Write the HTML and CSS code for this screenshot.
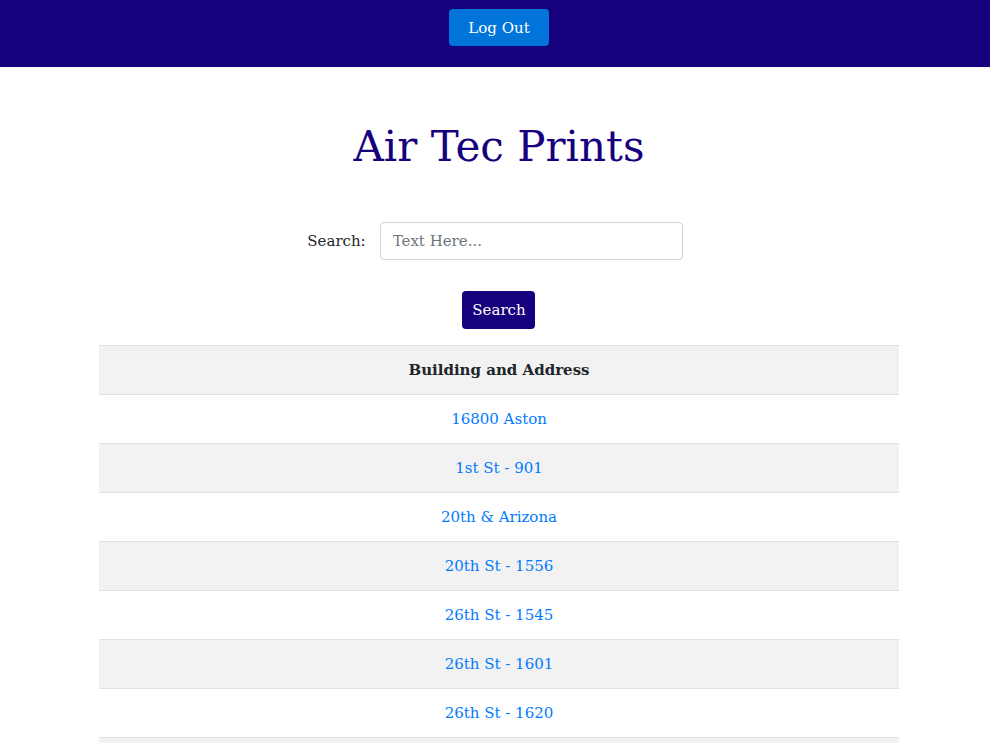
FILE: index.html
```html
<!DOCTYPE html>
<html lang="en">
<head>
<meta charset="utf-8">
<title>Air Tec Prints</title>
<link rel="stylesheet" href="styles.css">
</head>
<body>
<header class="topbar">
  <button class="btn btn-logout" type="button">Log Out</button>
</header>
<main class="content">
  <h1 class="title">Air Tec Prints</h1>
  <form class="search-form">
    <div class="search-row">
      <label class="search-label" for="q">Search:</label>
      <input class="search-input" id="q" type="text" placeholder="Text Here...">
    </div>
    <button class="btn btn-search" type="button">Search</button>
  </form>
  <table class="buildings">
    <thead>
      <tr><th>Building and Address</th></tr>
    </thead>
    <tbody>
      <tr><td><a href="#">16800 Aston</a></td></tr>
      <tr><td><a href="#">1st St - 901</a></td></tr>
      <tr><td><a href="#">20th &amp; Arizona</a></td></tr>
      <tr><td><a href="#">20th St - 1556</a></td></tr>
      <tr><td><a href="#">26th St - 1545</a></td></tr>
      <tr><td><a href="#">26th St - 1601</a></td></tr>
      <tr><td><a href="#">26th St - 1620</a></td></tr>
      <tr><td><a href="#">26th St - 1640</a></td></tr>
      <tr><td><a href="#">2nd St - 1100</a></td></tr>
    </tbody>
  </table>
</main>
</body>
</html>
```

FILE: styles.css
```css
html, body {
  margin: 0;
  padding: 0;
}
body {
  font-family: "DejaVu Serif", Georgia, serif;
  font-size: 15px;
  color: #212529;
  background: #fff;
}
.topbar {
  background: #16007e;
  height: 67px;
  display: flex;
  justify-content: center;
  align-items: flex-start;
  padding: 9px 0 0 8px;
  box-sizing: border-box;
}
.btn {
  font-family: inherit;
  font-size: 15px;
  color: #fff;
  border: none;
  border-radius: 4px;
  height: 38px;
  cursor: pointer;
}
.btn-logout {
  background: #0074d9;
  width: 100px;
  height: 37px;
}
.content {
  display: flex;
  flex-direction: column;
  align-items: center;
  padding-left: 8px;
}
.title {
  font-weight: normal;
  font-size: 42px;
  color: #16007e;
  margin: 50px 0 0;
  line-height: 60px;
}
.search-form {
  display: flex;
  flex-direction: column;
  align-items: center;
  margin-top: 45px;
}
.search-row {
  display: flex;
  align-items: center;
  gap: 14px;
  padding-right: 8px;
}
.search-label {
  font-size: 15px;
}
.search-input {
  width: 303px;
  height: 38px;
  box-sizing: border-box;
  border: 1px solid #ced4da;
  border-radius: 4px;
  padding: 0 12px;
  font-family: inherit;
  font-size: 15px;
  color: #495057;
}
.search-input::placeholder {
  color: #6c757d;
}
.btn-search {
  background: #16007e;
  width: 73px;
  margin-top: 31px;
}
.buildings {
  width: 800px;
  border-collapse: collapse;
  margin-top: 16px;
}
.buildings th,
.buildings td {
  text-align: center;
  height: 49px;
  box-sizing: border-box;
  padding: 0 12px;
  border-top: 1px solid #dee2e6;
}
.buildings th {
  background: #f2f2f2;
  font-weight: bold;
}
.buildings tbody tr:nth-child(even) td {
  background: #f2f2f2;
}
.buildings a {
  color: #007bff;
  text-decoration: none;
}
```
